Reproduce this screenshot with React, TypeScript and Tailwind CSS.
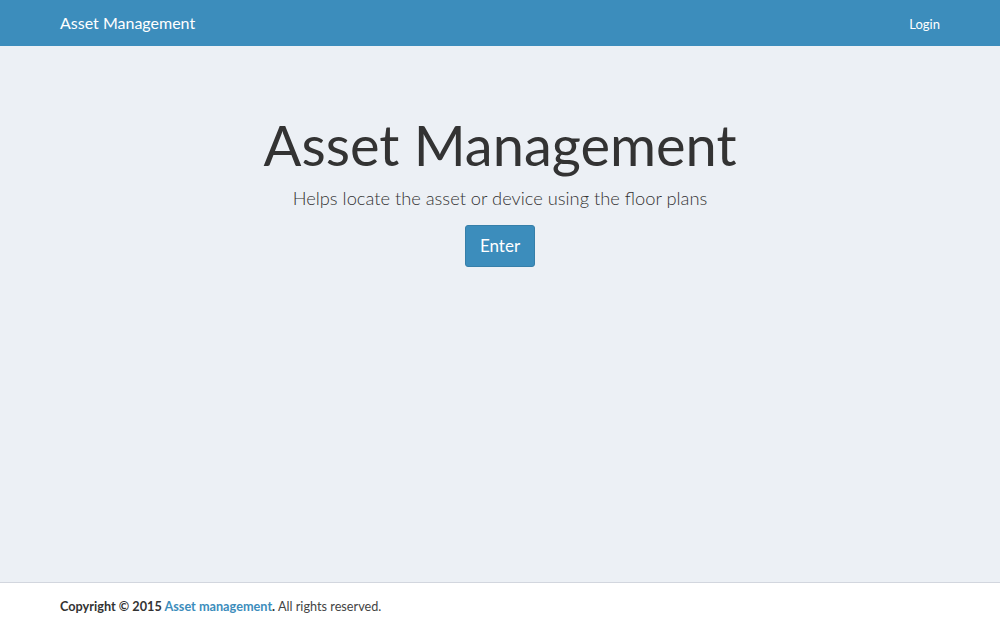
export default function App() {
  return (
    <div className="flex h-[625px] flex-col bg-[#ecf0f5] font-['Lato','Liberation_Sans',sans-serif] text-[#333]">
      {/* Header */}
      <header className="flex h-[46px] shrink-0 items-center justify-between bg-[#3c8dbc] px-[60px] text-white">
        <a className="text-[16px]">Asset Management</a>
        <a className="pt-[3px] text-[13px]">Login</a>
      </header>

      {/* Jumbotron */}
      <main className="flex flex-1 flex-col items-center pt-[64px]">
        <h1 className="text-[56px] leading-[70px] font-normal">Asset Management</h1>
        <p className="mt-[4px] text-[18.3px] leading-[28px] font-light text-[#333]">
          Helps locate the asset or device using the floor plans
        </p>
        <button className="mt-[13px] h-[42px] w-[70px] rounded-[3px] border border-[#367fa9] bg-[#3c8dbc] text-[17px] text-white">
          Enter
        </button>
      </main>

      {/* Footer */}
      <footer className="flex h-[43px] shrink-0 items-center border-t border-[#d2d6de] bg-white px-[60px] pt-[5px] text-[12.7px] text-[#444]">
        <strong className="text-[#333]">Copyright © 2015 <a className="text-[#3c8dbc]">Asset management</a>.</strong>
        <span>&nbsp;All rights reserved.</span>
      </footer>
    </div>
  )
}
